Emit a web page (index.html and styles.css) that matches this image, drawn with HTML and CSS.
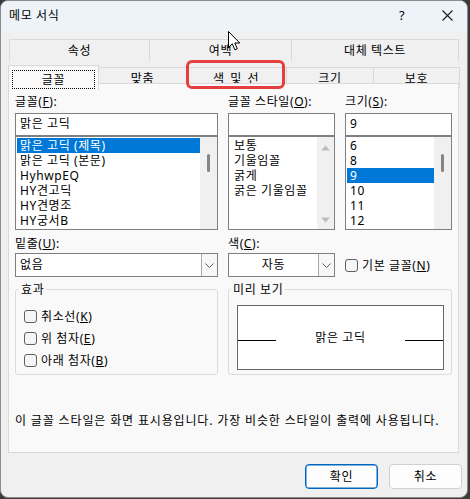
FILE: index.html
```html
<!DOCTYPE html>
<html lang="ko">
<head>
<meta charset="utf-8">
<title>메모 서식</title>
<link rel="stylesheet" href="styles.css">
</head>
<body>
<div class="window">
  <div class="titlebar">
    <span class="title">메모 서식</span>
    <span class="tb-help">?</span>
    <span class="tb-close"><svg width="11" height="11" viewBox="0 0 11 11"><path d="M0.5 0.5 L10.5 10.5 M10.5 0.5 L0.5 10.5" stroke="#1a1a1a" stroke-width="1.1" fill="none"/></svg></span>
  </div>

  <div class="tabs">
    <div class="tabrow row1">
      <div class="tab w-attr">속성</div>
      <div class="tab w-margin">여백</div>
      <div class="tab w-alt last">대체 텍스트</div>
    </div>
    <div class="tabrow row2">
      <div class="tab selected"><span class="focus">글꼴</span></div>
      <div class="tab w-align">맞춤</div>
      <div class="tab w-color">색 및 선</div>
      <div class="tab w-size">크기</div>
      <div class="tab w-protect last">보호</div>
    </div>
  </div>

  <div class="panel">
    <div class="grid">
      <div class="field">
        <div class="label">글꼴(<u>F</u>):</div>
        <div class="input">맑은 고딕</div>
        <div class="list">
          <ul class="items font-items">
            <li class="sel">맑은 고딕 (제목)</li>
            <li>맑은 고딕 (본문)</li>
            <li>HyhwpEQ</li>
            <li>HY견고딕</li>
            <li>HY견명조</li>
            <li>HY궁서B</li>
          </ul>
          <div class="track"><span class="thumb"></span></div>
        </div>
      </div>
      <div class="field">
        <div class="label">글꼴 스타일(<u>O</u>):</div>
        <div class="input"></div>
        <div class="list">
          <ul class="items style-items">
            <li>보통</li>
            <li>기울임꼴</li>
            <li>굵게</li>
            <li>굵은 기울임꼴</li>
          </ul>
          <div class="track arrows">
            <svg class="arr" width="9" height="6" viewBox="0 0 9 6"><path d="M0 5.5 L4.5 0.5 L9 5.5 Z" fill="#bcbcbc"/></svg>
            <svg class="arr" width="9" height="6" viewBox="0 0 9 6"><path d="M0 0.5 L4.5 5.5 L9 0.5 Z" fill="#bcbcbc"/></svg>
          </div>
        </div>
      </div>
      <div class="field">
        <div class="label">크기(<u>S</u>):</div>
        <div class="input">9</div>
        <div class="list">
          <ul class="items size-items">
            <li>6</li>
            <li>8</li>
            <li class="sel">9</li>
            <li>10</li>
            <li>11</li>
            <li>12</li>
          </ul>
          <div class="track"><span class="thumb"></span></div>
        </div>
      </div>

      <div class="field row2">
        <div class="label">밑줄(<u>U</u>):</div>
        <div class="combo">
          <span class="combo-text">없음</span>
          <span class="combo-btn"><svg width="9" height="5" viewBox="0 0 9 5"><path d="M0.5 0.5 L4.5 4.5 L8.5 0.5" stroke="#5a5a5a" stroke-width="1" fill="none"/></svg></span>
        </div>
      </div>
      <div class="field row2">
        <div class="label">색(<u>C</u>):</div>
        <div class="combo">
          <span class="combo-text center">자동</span>
          <span class="combo-btn"><svg width="9" height="5" viewBox="0 0 9 5"><path d="M0.5 0.5 L4.5 4.5 L8.5 0.5" stroke="#5a5a5a" stroke-width="1" fill="none"/></svg></span>
        </div>
      </div>
      <div class="check-cell row2">
        <span class="cb"></span><span class="cb-label">기본 글꼴(<u>N</u>)</span>
      </div>

      <fieldset class="group effects">
        <legend>효과</legend>
        <div class="check-row"><span class="cb"></span><span class="cb-label">취소선(<u>K</u>)</span></div>
        <div class="check-row"><span class="cb"></span><span class="cb-label">위 첨자(<u>E</u>)</span></div>
        <div class="check-row"><span class="cb"></span><span class="cb-label">아래 첨자(<u>B</u>)</span></div>
      </fieldset>
      <fieldset class="group preview">
        <legend>미리 보기</legend>
        <div class="preview-box">
          <span class="pline"></span>
          <span class="ptext">맑은 고딕</span>
          <span class="pline"></span>
        </div>
      </fieldset>
    </div>
    <p class="note">이 글꼴 스타일은 화면 표시용입니다. 가장 비슷한 스타일이 출력에 사용됩니다.</p>
  </div>

  <div class="footer">
    <button class="btn default">확인</button>
    <button class="btn">취소</button>
  </div>
</div>

<div class="highlight"></div>
<svg class="cursor" width="13" height="20" viewBox="0 0 13 20"><path d="M0.5 0.5 L0.5 16.5 L4.3 12.8 L6.9 18.8 L9.3 17.8 L6.8 12 L11.8 12 Z" fill="#ffffff" stroke="#000000" stroke-width="1" stroke-linejoin="round"/></svg>
</body>
</html>
```

FILE: styles.css
```css
* { box-sizing: border-box; }

html, body {
  margin: 0;
  padding: 0;
  background: #3b3b3b;
}

body {
  width: 470px;
  height: 499px;
  overflow: hidden;
  font-family: "Noto Sans", "Noto Sans CJK KR", sans-serif;
  font-size: 12px;
  letter-spacing: 0.6px;
  color: #000;
}

u { text-decoration: underline; text-underline-offset: 1px; }

.window {
  width: 468px;
  height: 498px;
  background: #f0f0f0;
  border: 1px solid #8c8c8c;
  border-radius: 8px;
  overflow: hidden;
}

/* title bar */
.titlebar {
  height: 30px;
  background: #eef3f9;
  display: flex;
  align-items: center;
  padding: 0 10px 1px 8px;
  line-height: 15px;
  overflow: hidden;
}
.title { flex: 1; }
.tb-help {
  width: 20px;
  text-align: center;
  font-size: 13px;
}
.tb-close {
  width: 20px;
  margin-left: 25px;
  display: flex;
  justify-content: center;
  align-items: center;
}

/* tabs */
.tabs {
  margin-top: 8px;
  padding-left: 7px;
  height: 44px;
}
.tabrow {
  display: flex;
  height: 22px;
}
.row1 { padding-left: 1px; }
.tab {
  height: 22px;
  line-height: 21px;
  text-align: center;
  border-top: 1px solid #d9d9d9;
  border-left: 1px solid #d9d9d9;
  background: #f0f0f0;
  white-space: nowrap;
}
.tab.last { border-right: 1px solid #d9d9d9; }
.w-attr { width: 140px; }
.w-margin { width: 142px; }
.w-alt { width: 168px; }
.w-align { width: 87px; border-left: none; }
.w-color { width: 100px; letter-spacing: 1.5px; }
.w-size { width: 87px; }
.w-protect { width: 87px; }

.tab.selected {
  position: relative;
  z-index: 2;
  width: 91px;
  height: 25px;
  margin-top: -2px;
  background: #f9f9f9;
  border-right: 1px solid #d9d9d9;
  padding: 4px 3px 1px 3px;
}
.focus {
  display: block;
  height: 19px;
  line-height: 17px;
  border: 1px dotted #000;
}

/* panel */
.panel {
  position: relative;
  z-index: 1;
  margin-left: 7px;
  width: 451px;
  height: 370px;
  background: #f9f9f9;
  border: 1px solid #dadada;
}
.grid {
  display: grid;
  grid-template-columns: 203px 107px 107px;
  column-gap: 10px;
  padding: 10px 5px 0 6px;
}
.label {
  line-height: 15px;
  height: 15px;
  white-space: nowrap;
}
.input {
  margin-top: 4px;
  height: 23px;
  border: 1px solid #7f7f7f;
  background: #fff;
  line-height: 20px;
  padding-left: 4px;
}
.list {
  height: 94px;
  border: 1px solid #7f7f7f;
  background: #fff;
  display: flex;
}
.items {
  list-style: none;
  margin: 0;
  padding: 1px 0 0 1px;
  flex: 1;
}
.items li {
  height: 15px;
  line-height: 15px;
  padding-left: 3px;
  white-space: nowrap;
}
.style-items li { padding-left: 4px; }
.items li.sel {
  background: #0078d7;
  color: #fff;
}
.track {
  width: 17px;
  background: #f0f0f0;
  position: relative;
}
.thumb {
  display: block;
  width: 3px;
  height: 18px;
  margin: 17px 0 0 7px;
  background: #858585;
  border-radius: 1.5px;
}
.arrows {
  display: flex;
  flex-direction: column;
  justify-content: space-between;
  align-items: center;
  padding: 8px 0 6px 0;
}

/* row 2 */
.row2 { margin-top: 6px; }
.field.row2 .label { margin-bottom: 2px; }
.combo {
  display: flex;
  height: 24px;
  border: 1px solid #7f7f7f;
  background: #fff;
}
.combo-text {
  flex: 1;
  line-height: 21px;
  padding-left: 4px;
}
.combo-text.center { text-align: center; padding-left: 0; }
.combo-btn {
  width: 16px;
  border-left: 1px solid #a8a8a8;
  background: #f7f7f7;
  display: flex;
  align-items: center;
  justify-content: center;
}
.check-cell {
  align-self: end;
  height: 24px;
  display: flex;
  align-items: center;
}
.cb {
  width: 13px;
  height: 13px;
  border: 1px solid #606060;
  border-radius: 3px;
  background: #f5f5f5;
  flex: none;
}
.cb-label {
  margin-left: 4px;
  line-height: 15px;
  white-space: nowrap;
}

/* group boxes */
.group {
  margin: 5px 0 0 0;
  border: 1px solid #dcdcdc;
  border-radius: 3px;
  padding: 8px 4px 3px 8px;
  min-width: 0;
}
.group legend {
  padding: 0 2px;
  margin-left: -5px;
  line-height: 15px;
}
.check-row {
  height: 22px;
  display: flex;
  align-items: center;
}
.preview {
  grid-column: 2 / 4;
  padding: 8px 7px 4px 8px;
}
.preview legend { margin-left: -6px; padding: 0 2px; }
.preview-box {
  height: 65px;
  border: 1px solid #666;
  background: #fff;
  display: flex;
  align-items: center;
  justify-content: space-between;
}
.pline {
  width: 38px;
  height: 1px;
  margin-top: 6px;
  background: #000;
}
.ptext { line-height: 15px; }

.note {
  margin: 38px 0 0 6px;
  line-height: 15px;
  white-space: nowrap;
  letter-spacing: 0.85px;
}

/* footer */
.footer {
  display: flex;
  justify-content: flex-end;
  gap: 11px;
  margin-top: 11px;
  padding-right: 5px;
}
.btn {
  width: 73px;
  height: 25px;
  font: inherit;
  letter-spacing: 0.6px;
  color: #000;
  background: #fdfdfd;
  border: 1px solid #d0d0d0;
  border-radius: 4px;
  padding: 0;
  line-height: 22px;
}
.btn.default {
  border: 1px solid #0067c0;
  box-shadow: inset 0 0 0 0.5px #0067c0;
}

/* overlays */
.highlight {
  position: absolute;
  left: 186px;
  top: 60px;
  width: 99px;
  height: 29px;
  border: 3px solid #e53e3e;
  border-radius: 6px;
  z-index: 5;
}
.cursor {
  position: absolute;
  left: 228px;
  top: 31px;
  z-index: 6;
}
```
